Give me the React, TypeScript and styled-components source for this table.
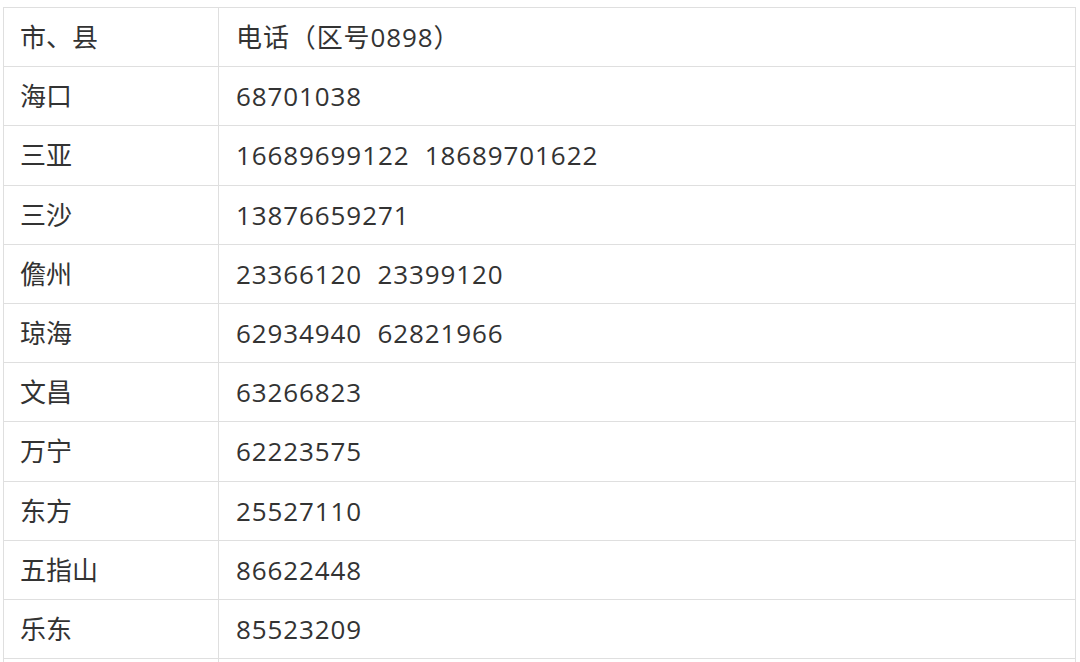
import React from "react";
import styled, { createGlobalStyle } from "styled-components";

const Global = createGlobalStyle`
  html, body { margin: 0; padding: 0; background: #ffffff; }
  body { font-family: "Open Sans", "Noto Sans CJK SC", sans-serif; }
`;

const Page = styled.div`
  padding: 7px 4px 0 3px;
`;

const Table = styled.table`
  width: 1073px;
  border-collapse: collapse;
  table-layout: fixed;
`;

const Row = styled.tr`
  height: 59.2px;
`;

const Cell = styled.td<{ $first?: boolean }>`
  box-sizing: border-box;
  width: ${(p) => (p.$first ? "215px" : "auto")};
  border: 1px solid #dfdfdf;
  padding: 0 0 0 ${(p) => (p.$first ? "16px" : "17px")};
  font-family: "Open Sans", "Noto Sans CJK SC", sans-serif;
  font-size: 26px;
  letter-spacing: ${(p) => (p.$first ? "0" : "0.9px")};
  color: #333333;
  white-space: pre;
  vertical-align: middle;
  line-height: 1;
`;

const rows: [string, string][] = [
  ["市、县", "电话（区号0898）"],
  ["海口", "68701038"],
  ["三亚", "16689699122  18689701622"],
  ["三沙", "13876659271"],
  ["儋州", "23366120  23399120"],
  ["琼海", "62934940  62821966"],
  ["文昌", "63266823"],
  ["万宁", "62223575"],
  ["东方", "25527110"],
  ["五指山", "86622448"],
  ["乐东", "85523209"],
  ["", ""],
];

export default function App() {
  return (
    <>
      <Global />
      <Page>
        <Table>
          <tbody>
            {rows.map(([a, b], i) => (
              <Row key={i}>
                <Cell $first>{a}</Cell>
                <Cell>{b}</Cell>
              </Row>
            ))}
          </tbody>
        </Table>
      </Page>
    </>
  );
}
